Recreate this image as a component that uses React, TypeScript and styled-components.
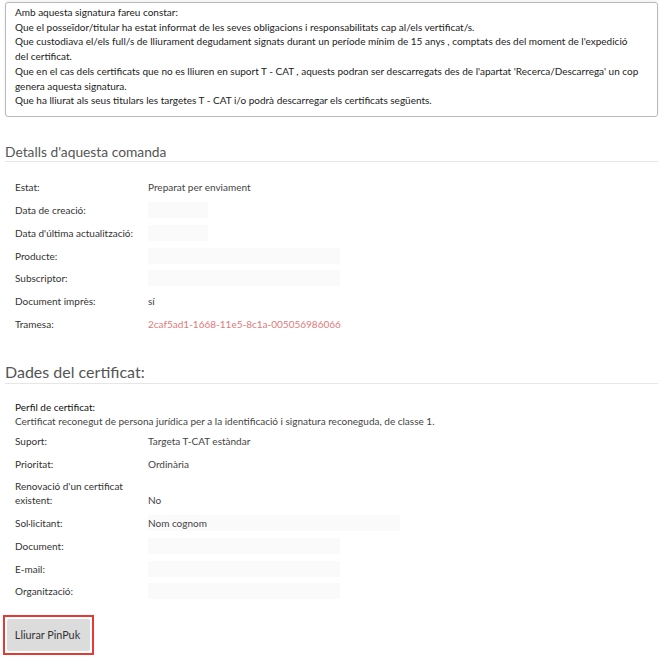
import styled, { createGlobalStyle } from 'styled-components';

const GlobalStyle = createGlobalStyle`
  body {
    margin: 0;
    background: #fff;
    font-family: Lato, "Open Sans", sans-serif;
    color: #333;
  }
`;

const Page = styled.div`
  width: 664px;
  padding: 2px 6px 0 5px;
  box-sizing: border-box;
`;

const Notice = styled.div`
  border: 1px solid #b9b9b9;
  border-radius: 3px;
  padding: 2px 14px 8px 9px;
  font-size: 10px;
  line-height: 14.7px;
  color: #222;
  box-shadow: 0 -1px 3px rgba(0, 0, 0, 0.08);
`;

const NoticeLine = styled.div``;

const Section = styled.section<{ $top: number }>`
  margin-top: ${(p) => p.$top}px;
`;

const Heading = styled.h2<{ $size: number; $lh: number; $pad: number }>`
  margin: 0;
  padding: 0 0 ${(p) => p.$pad}px 0;
  font-size: ${(p) => p.$size}px;
  line-height: ${(p) => p.$lh}px;
  font-weight: 400;
  color: #555;
  border-bottom: 1px solid #e6e6e6;
`;

const Rows = styled.div<{ $pad: number }>`
  padding: ${(p) => p.$pad}px 0 0 10px;
  display: flex;
  flex-direction: column;
`;

const Row = styled.div`
  display: grid;
  grid-template-columns: 133px 1fr;
  align-items: end;
  padding: 4.4px 0;
  font-size: 10px;
  line-height: 14px;
`;

const Label = styled.div`
  color: #333;
  padding-right: 10px;
`;

const Value = styled.div<{ $link?: boolean }>`
  color: ${(p) => (p.$link ? '#e07a7a' : '#444')};
`;

const Blank = styled.div<{ $w: number }>`
  width: ${(p) => p.$w}px;
  height: 16px;
  margin: -1px 0 -1px;
  background: #fafafa;
  color: #444;
  line-height: 16px;
`;

const Profile = styled.div`
  font-size: 10px;
  line-height: 14px;
  padding: 3px 0 1px;
`;

const ProfileTitle = styled.div`
  color: #111;
`;

const ProfileText = styled.div`
  color: #444;
`;

const ButtonFrame = styled.div`
  display: inline-block;
  margin: 12px 0 0 -2px;
  border: 2px solid #e53935;
  padding: 2px;
`;

const Button = styled.button`
  display: block;
  width: 83px;
  height: 32px;
  border: none;
  border-radius: 2px;
  background: #dcdcdc;
  font-family: Lato, sans-serif;
  font-size: 10.8px;
  color: #333;
  padding: 0 2px 0 0;
`;

const notice = [
  'Amb aquesta signatura fareu constar:',
  'Que el posseïdor/titular ha estat informat de les seves obligacions i responsabilitats cap al/els vertificat/s.',
  "Que custodiava el/els full/s de lliurament degudament signats durant un període mínim de 15 anys , comptats des del moment de l'expedició del certificat.",
  "Que en el cas dels certificats que no es lliuren en suport T - CAT , aquests podran ser descarregats des de l'apartat 'Recerca/Descarrega' un cop genera aquesta signatura.",
  'Que ha lliurat als seus titulars les targetes T - CAT i/o podrà descarregar els certificats següents.',
];

type Item = { label: string; value?: string; blank?: number; link?: boolean };

const order: Item[] = [
  { label: 'Estat:', value: 'Preparat per enviament' },
  { label: 'Data de creació:', blank: 60 },
  { label: "Data d'última actualització:", blank: 60 },
  { label: 'Producte:', blank: 192 },
  { label: 'Subscriptor:', blank: 192 },
  { label: 'Document imprès:', value: 'sí' },
  { label: 'Tramesa:', value: '2caf5ad1-1668-11e5-8c1a-005056986066', link: true },
];

const cert: Item[] = [
  { label: 'Suport:', value: 'Targeta T-CAT estàndar' },
  { label: 'Prioritat:', value: 'Ordinària' },
  { label: "Renovació d'un certificat existent:", value: 'No' },
  { label: 'Sol·licitant:', value: 'Nom cognom', blank: 252 },
  { label: 'Document:', blank: 192 },
  { label: 'E-mail:', blank: 192 },
  { label: 'Organització:', blank: 192 },
];

const renderRow = (it: Item) => (
  <Row key={it.label}>
    <Label>{it.label}</Label>
    {it.blank ? (
      <Blank $w={it.blank}>{it.value}</Blank>
    ) : (
      <Value $link={it.link}>{it.value}</Value>
    )}
  </Row>
);

const App = () => {
  return (
    <>
      <GlobalStyle />
      <Page>
        <Notice>
          {notice.map((t) => (
            <NoticeLine key={t}>{t}</NoticeLine>
          ))}
        </Notice>

        <Section $top={27}>
          <Heading $size={13.8} $lh={16} $pad={1}>
            Detalls d'aquesta comanda
          </Heading>
          <Rows $pad={14}>{order.map(renderRow)}</Rows>
        </Section>

        <Section $top={27}>
          <Heading $size={16} $lh={19} $pad={2}>
            Dades del certificat:
          </Heading>
          <Rows $pad={13}>
            <Profile>
              <ProfileTitle>Perfil de certificat:</ProfileTitle>
              <ProfileText>
                Certificat reconegut de persona jurídica per a la identificació i signatura reconeguda, de classe 1.
              </ProfileText>
            </Profile>
            {cert.map(renderRow)}
          </Rows>
        </Section>

        <ButtonFrame>
          <Button type="button">Lliurar PinPuk</Button>
        </ButtonFrame>
      </Page>
    </>
  );
};

export default App;
